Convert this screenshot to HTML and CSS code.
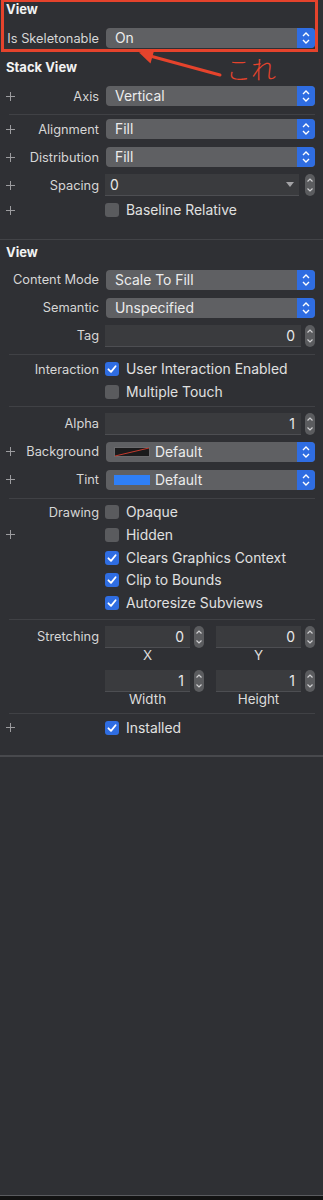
FILE: index.html
```html
<!DOCTYPE html>
<html lang="ja">
<head>
    <meta charset="UTF-8">
    <meta name="viewport" content="width=device-width, initial-scale=1.0">
    <title>Attributes Inspector</title>
    <link rel="stylesheet" href="styles.css">
</head>
<body>
    <div class="inspector">
        <!-- Custom class attributes -->
        <section class="group highlight">
            <h3 class="group-title">View</h3>
            <div class="row">
                <span class="plus"></span>
                <span class="label">Is Skeletonable</span>
                <div class="control">
                    <div class="popup">
                        <span class="popup-value">On</span>
                        <span class="popup-arrows"><svg width="18" height="20" viewBox="0 0 18 20"><polyline points="6,8 9,5 12,8"/><polyline points="6,12 9,15 12,12"/></svg></span>
                    </div>
                </div>
            </div>
        </section>

        <!-- Stack View -->
        <section class="group stack">
            <h3 class="group-title">Stack View</h3>
            <div class="row">
                <span class="plus"><svg width="9" height="9" viewBox="0 0 9 9"><path d="M4.5 0V9M0 4.5H9"/></svg></span>
                <span class="label">Axis</span>
                <div class="control">
                    <div class="popup">
                        <span class="popup-value">Vertical</span>
                        <span class="popup-arrows"><svg width="18" height="20" viewBox="0 0 18 20"><polyline points="6,8 9,5 12,8"/><polyline points="6,12 9,15 12,12"/></svg></span>
                    </div>
                </div>
            </div>
            <div class="rule snug"></div>
            <div class="row">
                <span class="plus"><svg width="9" height="9" viewBox="0 0 9 9"><path d="M4.5 0V9M0 4.5H9"/></svg></span>
                <span class="label">Alignment</span>
                <div class="control">
                    <div class="popup">
                        <span class="popup-value">Fill</span>
                        <span class="popup-arrows"><svg width="18" height="20" viewBox="0 0 18 20"><polyline points="6,8 9,5 12,8"/><polyline points="6,12 9,15 12,12"/></svg></span>
                    </div>
                </div>
            </div>
            <div class="row">
                <span class="plus"><svg width="9" height="9" viewBox="0 0 9 9"><path d="M4.5 0V9M0 4.5H9"/></svg></span>
                <span class="label">Distribution</span>
                <div class="control">
                    <div class="popup">
                        <span class="popup-value">Fill</span>
                        <span class="popup-arrows"><svg width="18" height="20" viewBox="0 0 18 20"><polyline points="6,8 9,5 12,8"/><polyline points="6,12 9,15 12,12"/></svg></span>
                    </div>
                </div>
            </div>
            <div class="row">
                <span class="plus"><svg width="9" height="9" viewBox="0 0 9 9"><path d="M4.5 0V9M0 4.5H9"/></svg></span>
                <span class="label">Spacing</span>
                <div class="control">
                    <div class="field combo">
                        <span>0</span>
                        <svg class="combo-arrow" width="8" height="5" viewBox="0 0 8 5"><path d="M0 0H8L4 5Z"/></svg>
                    </div>
                    <span class="stepper"><svg width="10" height="22" viewBox="0 0 10 22"><polyline points="2.5,7.5 5,5 7.5,7.5"/><polyline points="2.5,14.5 5,17 7.5,14.5"/></svg></span>
                </div>
            </div>
            <div class="row check">
                <span class="plus"><svg width="9" height="9" viewBox="0 0 9 9"><path d="M4.5 0V9M0 4.5H9"/></svg></span>
                <span class="label"></span>
                <div class="control">
                    <span class="box"></span>
                    <span class="check-text">Baseline Relative</span>
                </div>
            </div>
        </section>

        <div class="divider"></div>

        <!-- View -->
        <section class="group view">
            <h3 class="group-title">View</h3>
            <div class="row">
                <span class="plus"></span>
                <span class="label">Content Mode</span>
                <div class="control">
                    <div class="popup">
                        <span class="popup-value">Scale To Fill</span>
                        <span class="popup-arrows"><svg width="18" height="20" viewBox="0 0 18 20"><polyline points="6,8 9,5 12,8"/><polyline points="6,12 9,15 12,12"/></svg></span>
                    </div>
                </div>
            </div>
            <div class="row">
                <span class="plus"></span>
                <span class="label">Semantic</span>
                <div class="control">
                    <div class="popup">
                        <span class="popup-value">Unspecified</span>
                        <span class="popup-arrows"><svg width="18" height="20" viewBox="0 0 18 20"><polyline points="6,8 9,5 12,8"/><polyline points="6,12 9,15 12,12"/></svg></span>
                    </div>
                </div>
            </div>
            <div class="row">
                <span class="plus"></span>
                <span class="label">Tag</span>
                <div class="control">
                    <div class="field num">0</div>
                    <span class="stepper"><svg width="10" height="22" viewBox="0 0 10 22"><polyline points="2.5,7.5 5,5 7.5,7.5"/><polyline points="2.5,14.5 5,17 7.5,14.5"/></svg></span>
                </div>
            </div>

            <div class="rule"></div>
            <div class="row check">
                <span class="plus"></span>
                <span class="label">Interaction</span>
                <div class="control">
                    <span class="box on"><svg width="14" height="14" viewBox="0 0 14 14"><path d="M3.4 7.3L6 9.9L10.6 4.2"/></svg></span>
                    <span class="check-text">User Interaction Enabled</span>
                </div>
            </div>
            <div class="row check">
                <span class="plus"></span>
                <span class="label"></span>
                <div class="control">
                    <span class="box"></span>
                    <span class="check-text">Multiple Touch</span>
                </div>
            </div>

            <div class="rule tight"></div>
            <div class="row">
                <span class="plus"></span>
                <span class="label">Alpha</span>
                <div class="control">
                    <div class="field num">1</div>
                    <span class="stepper"><svg width="10" height="22" viewBox="0 0 10 22"><polyline points="2.5,7.5 5,5 7.5,7.5"/><polyline points="2.5,14.5 5,17 7.5,14.5"/></svg></span>
                </div>
            </div>
            <div class="row">
                <span class="plus"><svg width="9" height="9" viewBox="0 0 9 9"><path d="M4.5 0V9M0 4.5H9"/></svg></span>
                <span class="label">Background</span>
                <div class="control">
                    <div class="popup">
                        <svg class="well" width="36" height="10" viewBox="0 0 36 10"><rect x="0.5" y="0.5" width="35" height="9" fill="#1b1b1c" stroke="#6a6a6d"/><path d="M1 9L35 1" stroke="#c23b2e" stroke-width="1"/></svg>
                        <span class="popup-value">Default</span>
                        <span class="popup-arrows"><svg width="18" height="20" viewBox="0 0 18 20"><polyline points="6,8 9,5 12,8"/><polyline points="6,12 9,15 12,12"/></svg></span>
                    </div>
                </div>
            </div>
            <div class="row">
                <span class="plus"><svg width="9" height="9" viewBox="0 0 9 9"><path d="M4.5 0V9M0 4.5H9"/></svg></span>
                <span class="label">Tint</span>
                <div class="control">
                    <div class="popup">
                        <svg class="well" width="36" height="10" viewBox="0 0 36 10"><rect width="36" height="10" fill="#2f7ff6"/></svg>
                        <span class="popup-value">Default</span>
                        <span class="popup-arrows"><svg width="18" height="20" viewBox="0 0 18 20"><polyline points="6,8 9,5 12,8"/><polyline points="6,12 9,15 12,12"/></svg></span>
                    </div>
                </div>
            </div>

            <div class="rule pre-check"></div>
            <div class="row check">
                <span class="plus"></span>
                <span class="label">Drawing</span>
                <div class="control">
                    <span class="box"></span>
                    <span class="check-text">Opaque</span>
                </div>
            </div>
            <div class="row check">
                <span class="plus"><svg width="9" height="9" viewBox="0 0 9 9"><path d="M4.5 0V9M0 4.5H9"/></svg></span>
                <span class="label"></span>
                <div class="control">
                    <span class="box"></span>
                    <span class="check-text">Hidden</span>
                </div>
            </div>
            <div class="row check">
                <span class="plus"></span>
                <span class="label"></span>
                <div class="control">
                    <span class="box on"><svg width="14" height="14" viewBox="0 0 14 14"><path d="M3.4 7.3L6 9.9L10.6 4.2"/></svg></span>
                    <span class="check-text">Clears Graphics Context</span>
                </div>
            </div>
            <div class="row check">
                <span class="plus"></span>
                <span class="label"></span>
                <div class="control">
                    <span class="box on"><svg width="14" height="14" viewBox="0 0 14 14"><path d="M3.4 7.3L6 9.9L10.6 4.2"/></svg></span>
                    <span class="check-text">Clip to Bounds</span>
                </div>
            </div>
            <div class="row check">
                <span class="plus"></span>
                <span class="label"></span>
                <div class="control">
                    <span class="box on"><svg width="14" height="14" viewBox="0 0 14 14"><path d="M3.4 7.3L6 9.9L10.6 4.2"/></svg></span>
                    <span class="check-text">Autoresize Subviews</span>
                </div>
            </div>

            <div class="rule stretch-top"></div>
            <div class="stretch">
                <span class="plus"></span>
                <span class="label">Stretching</span>
                <div class="pair">
                    <div class="cell">
                        <div class="cell-line">
                            <div class="field num">0</div>
                            <span class="stepper"><svg width="10" height="22" viewBox="0 0 10 22"><polyline points="2.5,7.5 5,5 7.5,7.5"/><polyline points="2.5,14.5 5,17 7.5,14.5"/></svg></span>
                        </div>
                        <div class="caption">X</div>
                    </div>
                    <div class="cell">
                        <div class="cell-line">
                            <div class="field num">0</div>
                            <span class="stepper"><svg width="10" height="22" viewBox="0 0 10 22"><polyline points="2.5,7.5 5,5 7.5,7.5"/><polyline points="2.5,14.5 5,17 7.5,14.5"/></svg></span>
                        </div>
                        <div class="caption">Y</div>
                    </div>
                </div>
            </div>
            <div class="stretch second">
                <span class="plus"></span>
                <span class="label"></span>
                <div class="pair">
                    <div class="cell">
                        <div class="cell-line">
                            <div class="field num">1</div>
                            <span class="stepper"><svg width="10" height="22" viewBox="0 0 10 22"><polyline points="2.5,7.5 5,5 7.5,7.5"/><polyline points="2.5,14.5 5,17 7.5,14.5"/></svg></span>
                        </div>
                        <div class="caption">Width</div>
                    </div>
                    <div class="cell">
                        <div class="cell-line">
                            <div class="field num">1</div>
                            <span class="stepper"><svg width="10" height="22" viewBox="0 0 10 22"><polyline points="2.5,7.5 5,5 7.5,7.5"/><polyline points="2.5,14.5 5,17 7.5,14.5"/></svg></span>
                        </div>
                        <div class="caption">Height</div>
                    </div>
                </div>
            </div>

            <div class="rule stretch-bottom"></div>
            <div class="row check">
                <span class="plus"><svg width="9" height="9" viewBox="0 0 9 9"><path d="M4.5 0V9M0 4.5H9"/></svg></span>
                <span class="label"></span>
                <div class="control">
                    <span class="box on"><svg width="14" height="14" viewBox="0 0 14 14"><path d="M3.4 7.3L6 9.9L10.6 4.2"/></svg></span>
                    <span class="check-text">Installed</span>
                </div>
            </div>
        </section>

        <div class="divider thick"></div>

        <!-- Red annotation drawn over the panel -->
        <svg class="note-arrow" width="323" height="90" viewBox="0 0 323 90" aria-hidden="true">
            <path d="M152 56.5L220 75" stroke="#e5432c" stroke-width="3" stroke-linecap="round"/>
            <path d="M139 52.5L154.5 49L150.5 63.5Z" fill="#e5432c"/>
        </svg>
        <span class="note-text">これ</span>
    </div>
</body>
</html>
```

FILE: styles.css
```css
/* General Styles */
* { box-sizing: border-box; }

body {
    margin: 0;
    background: #121212;
    font-family: Inter, "Noto Sans", sans-serif;
    font-size: 13.9px;
    color: #d9d9d9;
}

.inspector {
    position: relative;
    width: 323px;
    height: 1196px;
    background: #2f3034;
    border-bottom: 1px solid #5a5b5f;
}

/* Groups */
.group { padding-right: 8px; }
.group.highlight { position: relative; }
.group.highlight::after {
    content: '';
    position: absolute;
    left: 1px;
    top: -1px;
    right: 5px;
    bottom: 0;
    border: 3px solid #e5432c;
}
.group.stack { padding-top: 6px; padding-bottom: 17px; }
.group.view { padding-top: 3px; }

.group-title {
    margin: 0 0 6px;
    padding-left: 6px;
    height: 18px;
    line-height: 18px;
    font-size: 13px;
    font-weight: 700;
    color: #f2f2f2;
}
.group.view .group-title { margin-bottom: 5px; }

.divider { height: 1px; background: #424347; }
.divider.thick { height: 2px; margin-top: 16px; background: #48494d; }

.rule { height: 1px; margin: 4px 0 3px 9px; background: #404145; }
.rule.snug { margin-bottom: 0; }
.rule.tight { margin-top: 2.5px; }
.rule.pre-check { margin-bottom: 2px; }
.rule.stretch-top { margin-bottom: 6px; }
.rule.stretch-bottom { margin-top: 7px; }

/* Rows */
.row { display: flex; align-items: center; height: 28px; }
.row.check { height: 22.75px; }

.plus { flex: none; width: 18px; padding-left: 6px; display: flex; align-items: center; }
.plus svg { stroke: #9c9c9f; stroke-width: 1; fill: none; }

/* right-aligned label; long text runs left over the empty plus column */
.label {
    flex: none;
    display: flex;
    justify-content: flex-end;
    width: 81px;
    margin-right: 6px;
    white-space: nowrap;
    font-size: 12.8px;
    color: #d6d6d6;
}

.control { flex: 1; display: flex; align-items: center; min-width: 0; }

/* Popup button */
.popup {
    flex: 1;
    display: flex;
    align-items: center;
    height: 20px;
    margin-left: 1px;
    background: #5f6063;
    border-radius: 4px;
    overflow: hidden;
}
.popup-value { flex: 1; padding-left: 9px; color: #ececec; white-space: nowrap; }
.popup .well + .popup-value { padding-left: 5px; }
.popup .well { margin-left: 8px; flex: none; }
.popup-arrows { width: 18px; height: 20px; background: #2f6de2; display: flex; }
.popup-arrows svg { fill: none; stroke: #fff; stroke-width: 1.4; }

/* Text fields */
.field {
    flex: 1;
    height: 22px;
    line-height: 22px;
    background: #3a3b3e;
    border-bottom: 1px solid #4d4e52;
    color: #e8e8e8;
}
.field.num { text-align: right; padding-right: 6px; }
.field.combo { display: flex; align-items: center; justify-content: space-between; padding: 0 5px; margin-right: 2px; }
.combo-arrow { fill: #a2a2a5; }

.stepper {
    flex: none;
    width: 10px;
    height: 22px;
    margin-left: 4px;
    background: #5b5c5f;
    border-radius: 5px;
    display: flex;
}
.stepper svg { fill: none; stroke: #cfcfd1; stroke-width: 1.2; }

/* Checkboxes */
.box {
    flex: none;
    width: 14px;
    height: 14px;
    border-radius: 3px;
    background: #5a5b5e;
    display: flex;
}
.box.on { background: #2f6de2; }
.box svg { fill: none; stroke: #fff; stroke-width: 1.8; stroke-linecap: round; stroke-linejoin: round; }
.check-text { margin-left: 7px; color: #e0e0e0; white-space: nowrap; }

/* Stretching */
.stretch { display: flex; align-items: flex-start; }
.stretch.second { margin-top: 8px; }
.stretch .label { line-height: 22px; }
.stretch .plus { height: 22px; }
.pair { flex: 1; display: grid; grid-template-columns: 1fr 1fr; column-gap: 12px; }
.cell-line { display: flex; align-items: center; }
.caption { padding-right: 14px; text-align: center; line-height: 14px; font-size: 13.4px; color: #dcdcdc; }

/* Annotation overlay */
.note-arrow { position: absolute; left: 0; top: 0; }
.note-text {
    position: absolute;
    left: 226px;
    top: 54px;
    font-family: "Noto Sans CJK JP", sans-serif;
    font-size: 25px;
    line-height: 28px;
    font-weight: 300;
    color: #e5432c;
}
```
